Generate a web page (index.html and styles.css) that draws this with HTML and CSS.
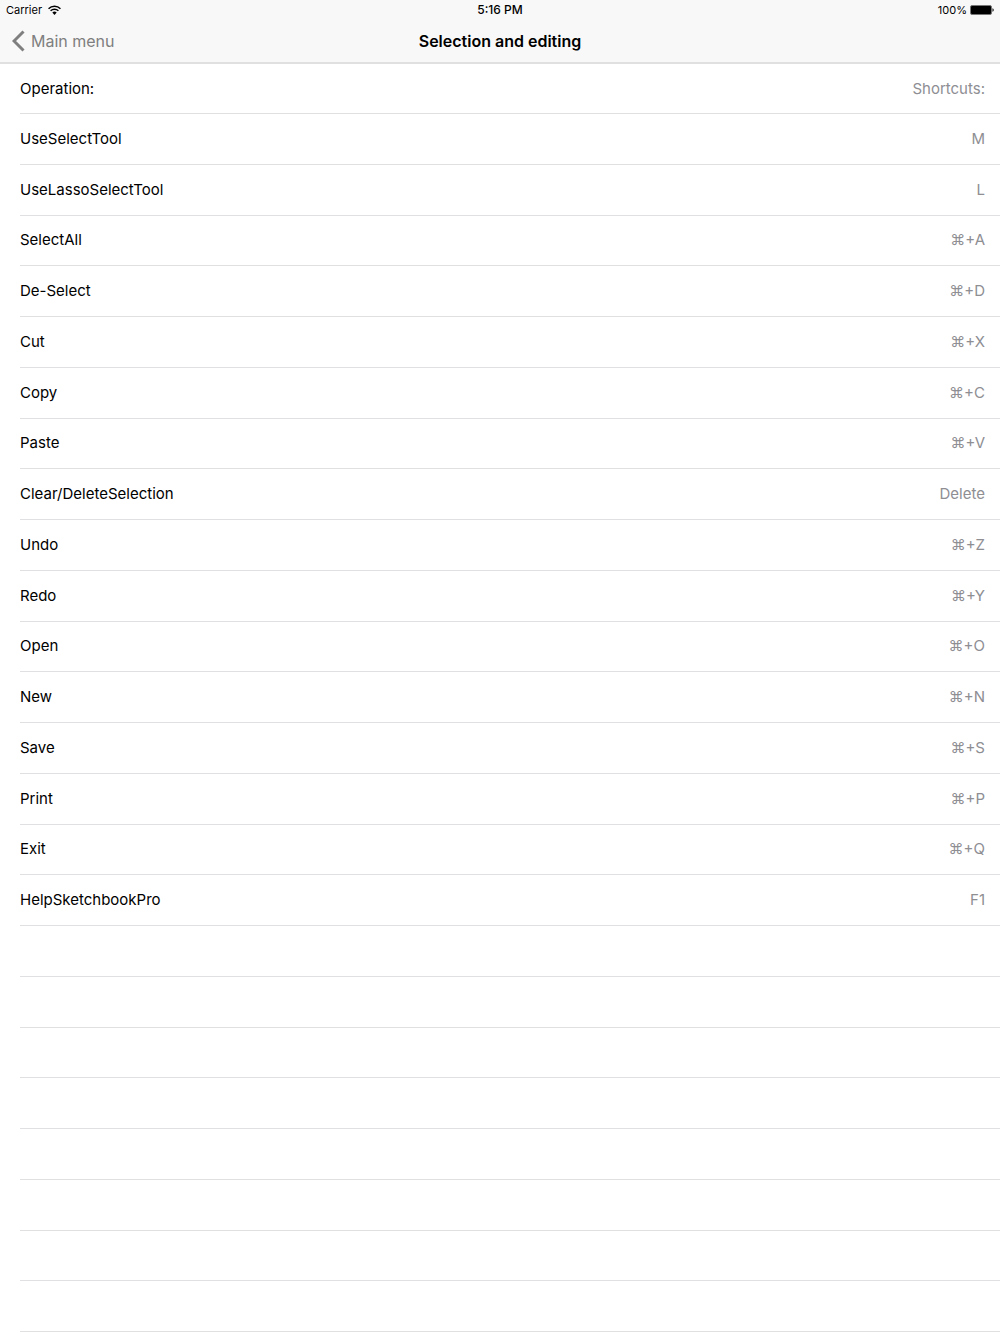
FILE: index.html
```html
<!DOCTYPE html>
<html lang="en">
<head>
  <meta charset="UTF-8">
  <meta name="viewport" content="width=device-width, initial-scale=1.0">
  <title>Selection and editing</title>
  <link rel="stylesheet" href="styles.css">
</head>
<body>

<header class="topbar">
  <div class="status">
    <div class="carrier">
      <span>Carrier</span>
      <svg class="wifi" viewBox="0 0 12 9" aria-hidden="true">
        <path d="M.5 3.3a7.8 7.8 0 0 1 11 0M2.4 5.3a5.1 5.1 0 0 1 7.2 0" fill="none" stroke="#000" stroke-width="1.3"/>
        <path d="M6 9 4 6.9a2.9 2.9 0 0 1 4 0z"/>
      </svg>
    </div>
    <div class="time">5:16 PM</div>
    <div class="power">
      <span>100%</span>
      <svg class="battery" viewBox="0 0 24 10" aria-hidden="true">
        <rect x=".5" y=".5" width="21" height="9" rx="1.5" fill="#000" stroke="#777"/>
        <path d="M22.5 3.2c1.6.4 1.6 3.2 0 3.6z"/>
      </svg>
    </div>
  </div>
  <nav class="nav">
    <a class="back" href="#">
      <svg class="chevron" viewBox="0 0 13 22" aria-hidden="true">
        <path d="M11.5 1.5 2 11l9.5 9.5" fill="none" stroke="currentColor" stroke-width="3"/>
      </svg>
      Main menu
    </a>
    <h1>Selection and editing</h1>
  </nav>
</header>

<main>
  <table class="shortcuts">
    <thead>
      <tr><th scope="col">Operation:</th><th scope="col">Shortcuts:</th></tr>
    </thead>
    <tbody>
      <tr><td>UseSelectTool</td><td>M</td></tr>
      <tr><td>UseLassoSelectTool</td><td>L</td></tr>
      <tr><td>SelectAll</td><td>⌘+A</td></tr>
      <tr><td>De-Select</td><td>⌘+D</td></tr>
      <tr><td>Cut</td><td>⌘+X</td></tr>
      <tr><td>Copy</td><td>⌘+C</td></tr>
      <tr><td>Paste</td><td>⌘+V</td></tr>
      <tr><td>Clear/DeleteSelection</td><td>Delete</td></tr>
      <tr><td>Undo</td><td>⌘+Z</td></tr>
      <tr><td>Redo</td><td>⌘+Y</td></tr>
      <tr><td>Open</td><td>⌘+O</td></tr>
      <tr><td>New</td><td>⌘+N</td></tr>
      <tr><td>Save</td><td>⌘+S</td></tr>
      <tr><td>Print</td><td>⌘+P</td></tr>
      <tr><td>Exit</td><td>⌘+Q</td></tr>
      <tr><td>HelpSketchbookPro</td><td>F1</td></tr>
      <!-- empty rows down to the end of the screen -->
      <tr><td></td><td></td></tr>
      <tr><td></td><td></td></tr>
      <tr><td></td><td></td></tr>
      <tr><td></td><td></td></tr>
      <tr><td></td><td></td></tr>
      <tr><td></td><td></td></tr>
      <tr><td></td><td></td></tr>
      <tr><td></td><td></td></tr>
    </tbody>
  </table>
</main>

</body>
</html>
```
FILE: styles.css
```css
*, *::before, *::after { box-sizing: border-box; margin: 0; padding: 0; }

:root {
  --bar:    #f8f8f8;
  --edge:   #e0e0e0;
  --line:   #e0e0e2;
  --muted:  #8e8e93;
  --back:   #7f7f7f;
}

body {
  display: flex;
  flex-direction: column;
  height: 100vh;
  font-family: Inter, "Liberation Sans", sans-serif;
  font-size: 15px;
  line-height: 20px;
  background: #fff;
  color: #000;
}

/* top bar */
.topbar {
  background: var(--bar);
  border-bottom: 2px solid var(--edge);
}

.status,
.nav {
  display: grid;
  grid-template-columns: 1fr auto 1fr;
  align-items: center;
}

.status {
  height: 20px;
  padding: 0 6px;
  font-size: 11px;
}

.carrier,
.power {
  display: flex;
  align-items: center;
}

.carrier { gap: 6px; }
.power { gap: 3px; justify-content: flex-end; }
.time { font-size: 12px; font-weight: 500; }
.wifi { width: 13px; height: 10px; }
.battery { width: 24px; height: 10px; }

.nav {
  height: 42px;
  padding: 0 12px;
}

.back {
  display: flex;
  align-items: center;
  gap: 6px;
  color: var(--back);
  font-size: 16px;
  text-decoration: none;
}

.chevron { width: 13px; height: 22px; }

h1 {
  font-size: 16px;
  font-weight: 600;
}

/* list */
main {
  flex: 1;
  padding: 0 0 2px 20px;
}

.shortcuts {
  width: 100%;
  height: 100%;
  border-collapse: separate;
  border-spacing: 0;
}

.shortcuts th,
.shortcuts td {
  height: 50px;
  border-bottom: 1px solid var(--line);
  font-weight: 400;
  text-align: left;
  vertical-align: middle;
}

.shortcuts th:last-child,
.shortcuts td:last-child {
  padding-right: 15px;
  color: var(--muted);
  text-align: right;
}
```
